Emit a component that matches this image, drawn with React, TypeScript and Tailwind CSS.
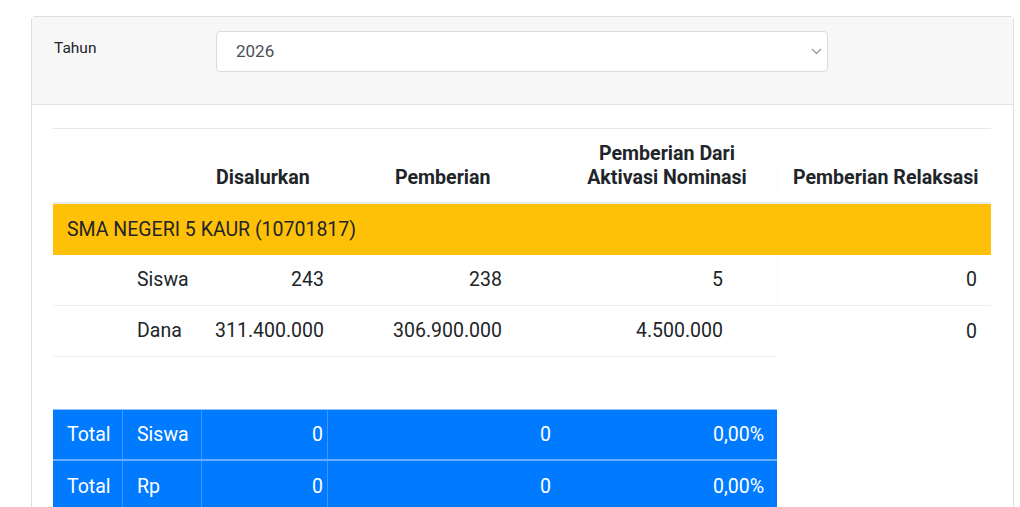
import React from "react";

const font = { fontFamily: "Roboto, 'Noto Sans', Arial, sans-serif" };

type Row = { label: string; values: string[] };

const rows: Row[] = [
  { label: "Siswa", values: ["243", "238", "5", "0"] },
  { label: "Dana", values: ["311.400.000", "306.900.000", "4.500.000", "0"] },
];

const totals = ["Siswa", "Rp"];

function Chevron() {
  return (
    <svg width="11" height="7" viewBox="0 0 11 7" fill="none">
      <path d="M1 1l4.5 4.5L10 1" stroke="#8a8f94" strokeWidth="1.1" />
    </svg>
  );
}

export default function App() {
  return (
    <div className="min-h-screen bg-white pt-[16px] pl-[31px] text-[#212529]" style={font}>
      <div className="w-[983px] rounded-[4px] border border-[#dedede] bg-white">
        {/* filter header */}
        <div className="flex items-start border-b border-[#e3e3e3] bg-[#f7f7f7] pt-[14px] pb-[32px] pl-[22px]">
          <div className="w-[162px] pt-[6px] text-[15.5px] leading-[22px]">Tahun</div>
          <div className="flex h-[41px] w-[612px] items-center justify-between rounded-[4px] border border-[#d9dde1] bg-white pl-[19px] pr-[5px]">
            <span className="text-[17px] text-[#495057]">2026</span>
            <Chevron />
          </div>
        </div>

        {/* body */}
        <div className="pt-[23px] pl-[21px] pr-[22px] pb-[20px]">
          <div className="w-[938px]">
            {/* table header */}
            <div className="grid h-[76px] grid-cols-[70px_79px_134px_178px_263px_214px] items-end border-t border-[#e6e9ec] border-b-2 border-b-[#e9ecef] pb-[12px] text-[19.6px] font-bold leading-[24px]">
              <div />
              <div />
              <div className="pl-[14px]">Disalurkan</div>
              <div className="pl-[59px]">Pemberian</div>
              <div className="pl-[43px] text-center">
                Pemberian Dari
                <br />
                Aktivasi Nominasi
              </div>
              <div className="whitespace-nowrap border-l border-[#f7f8f9] pl-[15px]">Pemberian Relaksasi</div>
            </div>

            {/* school row */}
            <div className="flex h-[51px] items-center bg-[#ffc107] pl-[14px] text-[19.5px]">
              SMA NEGERI 5 KAUR (10701817)
            </div>

            {/* data rows */}
            {rows.map((r, i) => (
              <div
                key={r.label}
                className={`grid h-[51px] grid-cols-[70px_79px_134px_178px_263px_214px] items-center text-[19.5px] ${
                  i === 0 ? "border-b border-[#eceef0]" : ""
                }`}
              >
                <div className={`h-full ${i === 1 ? "border-b border-[#eceef0]" : ""}`} />
                <div className={`flex h-full items-center pl-[14px] ${i === 1 ? "border-b border-[#eceef0]" : ""}`}>
                  {r.label}
                </div>
                <div className={`flex h-full items-center justify-end pr-[12px] ${i === 1 ? "border-b border-[#eceef0]" : ""}`}>
                  {r.values[0]}
                </div>
                <div className={`flex h-full items-center justify-end pr-[12px] ${i === 1 ? "border-b border-[#eceef0]" : ""}`}>
                  {r.values[1]}
                </div>
                <div className={`flex h-full items-center justify-end pr-[54px] ${i === 1 ? "border-b border-[#eceef0]" : ""}`}>
                  {r.values[2]}
                </div>
                <div className={`flex h-full items-center justify-end pr-[14px] ${i === 0 ? "border-l border-[#f7f8f9]" : ""}`}>
                  {r.values[3]}
                </div>
              </div>
            ))}

            {/* totals */}
            <div className="mt-[52px] w-[724px] border-t border-[#8fc3ff] bg-[#007bff] text-[19.5px] text-white">
              {totals.map((label, i) => (
                <div
                  key={label}
                  className={`grid h-[51px] grid-cols-[70px_79px_126px_235px_214px] ${
                    i === 0 ? "border-b-2 border-[#69abff]" : ""
                  }`}
                >
                  <div className="flex items-center border-r border-[#3d97ff] pl-[14px]">Total</div>
                  <div className="flex items-center border-r border-[#3d97ff] pl-[14px]">{label}</div>
                  <div className="flex items-center justify-end border-r border-[#3d97ff] pr-[4px]">0</div>
                  <div className="flex items-center justify-end pr-[12px]">0</div>
                  <div className="flex items-center justify-end pr-[13px]">0,00%</div>
                </div>
              ))}
            </div>
          </div>
        </div>
      </div>
    </div>
  );
}
